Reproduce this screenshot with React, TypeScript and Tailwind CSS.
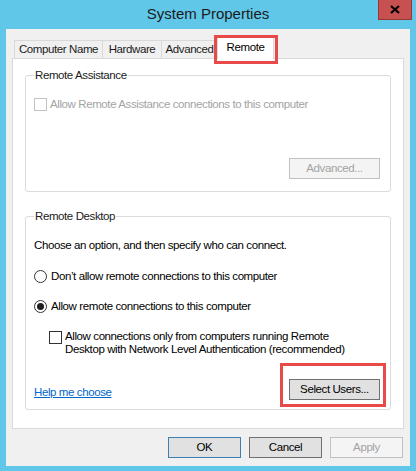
import React from 'react';

const tabs = ['Computer Name', 'Hardware', 'Advanced', 'Remote'];
const tabWidths: Record<string, string> = {
  'Computer Name': 'w-[88px]',
  Hardware: 'w-[59px]',
  Advanced: 'w-[56px]',
  Remote: 'w-[57px]',
};

const CheckBox: React.FC<{ disabled?: boolean }> = ({ disabled }) => (
  <span
    className={`inline-block w-[13px] h-[13px] shrink-0 bg-white border ${
      disabled ? 'border-[#c4c4c4]' : 'border-[#333333]'
    }`}
  />
);

const Radio: React.FC<{ checked?: boolean }> = ({ checked }) => (
  <span className="flex items-center justify-center w-[13px] h-[13px] shrink-0 rounded-full bg-white border border-[#333333]">
    {checked && <span className="block w-[7px] h-[7px] rounded-full bg-[#1f1f1f]" />}
  </span>
);

export default function App() {
  return (
    <div className="w-[416px] h-[471px] bg-[#60c7e9] flex flex-col font-['Segoe_UI','Liberation_Sans',sans-serif] text-[11.5px] tracking-[-0.4px] text-black overflow-hidden">
      {/* title bar */}
      <div className="relative h-[29px] flex items-start justify-center">
        <span className="mt-[5px] text-[15px] tracking-normal leading-[18px] text-[#1b1b1b]">System Properties</span>
        <button className="absolute right-[4px] top-0 w-[34px] h-[20px] bg-[#c75050] border border-t-0 border-[#9a3535] flex items-center justify-center">
          <svg width="10" height="9" viewBox="0 0 10 9">
            <path d="M1 1 L9 8 M9 1 L1 8" stroke="#000" strokeWidth="2.2" />
          </svg>
        </button>
      </div>

      {/* client */}
      <div className="mx-[6px] h-[437px] bg-[#f0f0f0] flex flex-col px-[6px]">
        <div className="mt-[7px] pl-[2px] flex items-end h-[22px] relative z-10">
          {tabs.map((t) => {
            const selected = t === 'Remote';
            return (
              <div key={t} className={`relative ${tabWidths[t]}`}>
                <div
                  className={
                    selected
                      ? 'h-[23px] -mb-px bg-white border border-b-0 border-[#d9d9d9] flex justify-center pt-[3px] leading-[15px]'
                      : 'h-[18px] bg-[#f0f0f0] border border-b-0 border-r-0 border-[#d9d9d9] flex justify-center pt-[1px] leading-[15px] text-[#1b1b1b]'
                  }
                >
                  {t}
                </div>
                {selected && (
                  <div className="absolute -left-[3px] -right-[4px] -top-[1px] -bottom-[6px] border-[3px] border-[#e84a4a] pointer-events-none" />
                )}
              </div>
            );
          })}
        </div>

        <div className="h-[371px] bg-white border border-[#d9d9d9] px-[12px] flex flex-col">
          {/* Remote Assistance */}
          <fieldset className="mt-[9px] border border-[#dcdcdc] rounded-[3px] px-[8px] pb-[12px] flex flex-col">
            <legend className="px-[1px] leading-[15px] text-[#1b1b1b]">Remote Assistance</legend>
            <div className="mt-[14px] flex items-center gap-[3px] h-[15px]">
              <CheckBox disabled />
              <span className="text-[#a3a3a3]">Allow Remote Assistance connections to this computer</span>
            </div>
            <div className="mt-[46px] flex justify-end pr-[2px]">
              <button className="w-[91px] h-[21px] bg-[#f4f4f4] border border-[#c1c1c1] text-[#a3a3a3] leading-[19px]">
                Advanced...
              </button>
            </div>
          </fieldset>

          {/* Remote Desktop */}
          <fieldset className="mt-[17px] border border-[#dcdcdc] rounded-[3px] px-[8px] pb-[9px] flex flex-col">
            <legend className="px-[1px] leading-[15px] text-[#1b1b1b]">Remote Desktop</legend>
            <div className="mt-[14px] leading-[15px]">Choose an option, and then specify who can connect.</div>
            <div className="mt-[16px] flex items-center gap-[4px] h-[15px]">
              <Radio />
              <span>Don’t allow remote connections to this computer</span>
            </div>
            <div className="mt-[15px] flex items-center gap-[4px] h-[15px]">
              <Radio checked />
              <span>Allow remote connections to this computer</span>
            </div>
            <div className="mt-[16px] pl-[15px] flex items-start gap-[3px]">
              <span className="mt-[1px]">
                <CheckBox />
              </span>
              <span className="leading-[13px] w-[290px]">
                Allow connections only from computers running Remote Desktop with Network Level Authentication
                (recommended)
              </span>
            </div>
            <div className="mt-[23px] flex items-end justify-between pr-[2px]">
              <a href="#" className="text-[#0066cc] underline leading-[15px]">
                Help me choose
              </a>
              <div className="relative">
                <button className="block w-[91px] h-[21px] bg-[#e1e1e1] border border-[#707070] leading-[19px]">
                  Select Users...
                </button>
                <div className="absolute -left-[9px] -right-[6px] -top-[16px] -bottom-[7px] border-[3px] border-[#e84a4a] pointer-events-none" />
              </div>
            </div>
          </fieldset>
        </div>

        <div className="mt-[8px] flex justify-end gap-[8px] pr-[1px]">
          <button className="w-[73px] h-[21px] bg-[#e1e1e1] border border-[#3c7fb1] leading-[19px]">OK</button>
          <button className="w-[73px] h-[21px] bg-[#e1e1e1] border border-[#707070] leading-[19px]">Cancel</button>
          <button className="w-[73px] h-[21px] bg-[#f4f4f4] border border-[#c1c1c1] text-[#a3a3a3] leading-[19px]">
            Apply
          </button>
        </div>
      </div>
    </div>
  );
}
